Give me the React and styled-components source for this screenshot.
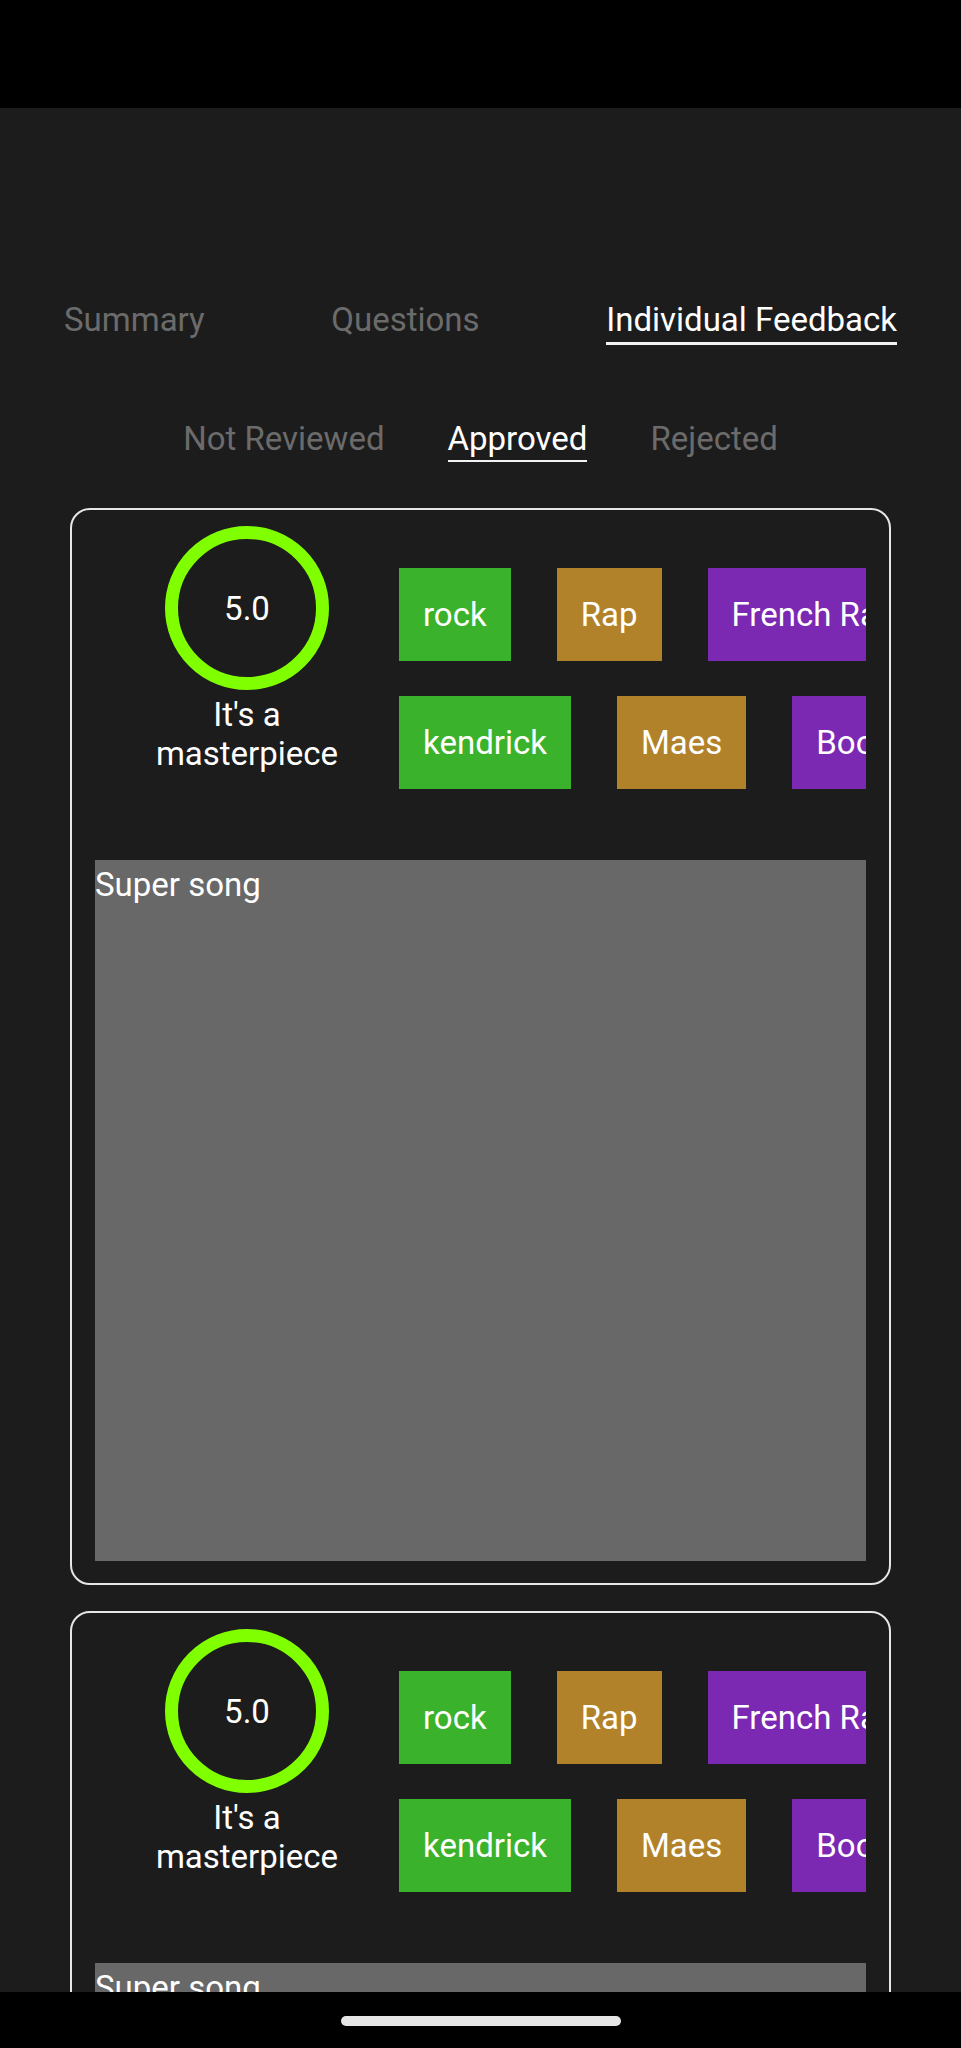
import React from "react";
import styled, { createGlobalStyle } from "styled-components";

const GlobalStyle = createGlobalStyle`
  html, body {
    margin: 0;
    padding: 0;
    background: #1c1c1c;
  }
  * { box-sizing: border-box; }
  body {
    font-family: Roboto, "Liberation Sans", sans-serif;
  }
`;

const Screen = styled.div`
  width: 961px;
  height: 2048px;
  display: flex;
  flex-direction: column;
  background: #1c1c1c;
  overflow: hidden;
  font-family: Roboto, "Liberation Sans", sans-serif;
`;

const StatusBar = styled.div`
  height: 108px;
  flex-shrink: 0;
  background: #000;
`;

const Main = styled.main`
  flex: 1;
  min-height: 0;
  overflow: hidden;
  display: flex;
  flex-direction: column;
  padding-top: 192px;
`;

const TabBar = styled.nav`
  display: flex;
  justify-content: space-between;
  padding: 0 64px;
`;

const Tab = styled.div`
  font-size: 33px;
  line-height: normal;
  color: ${(p) => (p.$active ? "#ffffff" : "#6b6b6b")};
  padding-bottom: 3px;
  border-bottom: 3px solid ${(p) => (p.$active ? "#f2f2f2" : "transparent")};
`;

const SubTabBar = styled.nav`
  display: flex;
  justify-content: center;
  gap: 63px;
  margin-top: 74px;
`;

const SubTab = styled.div`
  font-size: 33px;
  line-height: normal;
  color: ${(p) => (p.$active ? "#ffffff" : "#6b6b6b")};
  padding-bottom: 2px;
  border-bottom: 2px solid ${(p) => (p.$active ? "#f2f2f2" : "transparent")};
`;

const CardList = styled.div`
  display: flex;
  flex-direction: column;
  gap: 26px;
  margin: 46px 70px 0;
`;

const Card = styled.section`
  border: 2px solid #e6e6e6;
  border-radius: 20px;
  padding: 16px 23px 22px;
  flex-shrink: 0;
`;

const TopRow = styled.div`
  display: flex;
  align-items: flex-start;
`;

const ScoreCol = styled.div`
  width: 304px;
  flex-shrink: 0;
  display: flex;
  flex-direction: column;
  align-items: center;
`;

const ScoreRing = styled.div`
  width: 164px;
  height: 164px;
  border-radius: 50%;
  border: 13px solid #80ff00;
  display: flex;
  align-items: center;
  justify-content: center;
  color: #ffffff;
  font-size: 33px;
`;

const ScoreLabel = styled.div`
  margin-top: 5px;
  max-width: 200px;
  text-align: center;
  color: #ffffff;
  font-size: 33px;
  line-height: normal;
`;

const TagArea = styled.div`
  flex: 1;
  min-width: 0;
  overflow: hidden;
  margin-top: 42px;
  display: flex;
  flex-direction: column;
  gap: 35px;
`;

const TagRow = styled.div`
  display: flex;
  gap: 46px;
`;

const Tag = styled.div`
  flex-shrink: 0;
  height: 93px;
  padding: 0 24px;
  display: flex;
  align-items: center;
  background: ${(p) => p.$color};
  color: #ffffff;
  font-size: 33px;
  white-space: nowrap;
`;

const Comment = styled.div`
  margin-top: 71px;
  height: 701px;
  background: #686868;
  color: #ffffff;
  font-size: 33px;
  line-height: normal;
  padding-top: 5px;
`;

const NavBar = styled.div`
  height: 56px;
  flex-shrink: 0;
  background: #000;
  display: flex;
  justify-content: center;
  padding-top: 24px;
`;

const HomePill = styled.div`
  width: 280px;
  height: 10px;
  border-radius: 5px;
  background: #e6e6e6;
`;

const COLORS = {
  green: "#3bb22b",
  gold: "#b1822a",
  purple: "#7b28b3",
};

const tagRows = [
  [
    { label: "rock", color: COLORS.green },
    { label: "Rap", color: COLORS.gold },
    { label: "French Rap", color: COLORS.purple },
  ],
  [
    { label: "kendrick", color: COLORS.green },
    { label: "Maes", color: COLORS.gold },
    { label: "Booba", color: COLORS.purple },
  ],
];

const feedback = [
  { id: 1, score: "5.0", label: "It's a masterpiece", comment: "Super song" },
  { id: 2, score: "5.0", label: "It's a masterpiece", comment: "Super song" },
];

function FeedbackCard({ item }) {
  return (
    <Card>
      <TopRow>
        <ScoreCol>
          <ScoreRing>{item.score}</ScoreRing>
          <ScoreLabel>{item.label}</ScoreLabel>
        </ScoreCol>
        <TagArea>
          {tagRows.map((row, i) => (
            <TagRow key={i}>
              {row.map((t) => (
                <Tag key={t.label} $color={t.color}>
                  {t.label}
                </Tag>
              ))}
            </TagRow>
          ))}
        </TagArea>
      </TopRow>
      <Comment>{item.comment}</Comment>
    </Card>
  );
}

export default function App() {
  return (
    <>
      <GlobalStyle />
      <Screen>
        <StatusBar />
        <Main>
          <TabBar>
            <Tab>Summary</Tab>
            <Tab>Questions</Tab>
            <Tab $active>Individual Feedback</Tab>
          </TabBar>
          <SubTabBar>
            <SubTab>Not Reviewed</SubTab>
            <SubTab $active>Approved</SubTab>
            <SubTab>Rejected</SubTab>
          </SubTabBar>
          <CardList>
            {feedback.map((f) => (
              <FeedbackCard key={f.id} item={f} />
            ))}
          </CardList>
        </Main>
        <NavBar>
          <HomePill />
        </NavBar>
      </Screen>
    </>
  );
}
